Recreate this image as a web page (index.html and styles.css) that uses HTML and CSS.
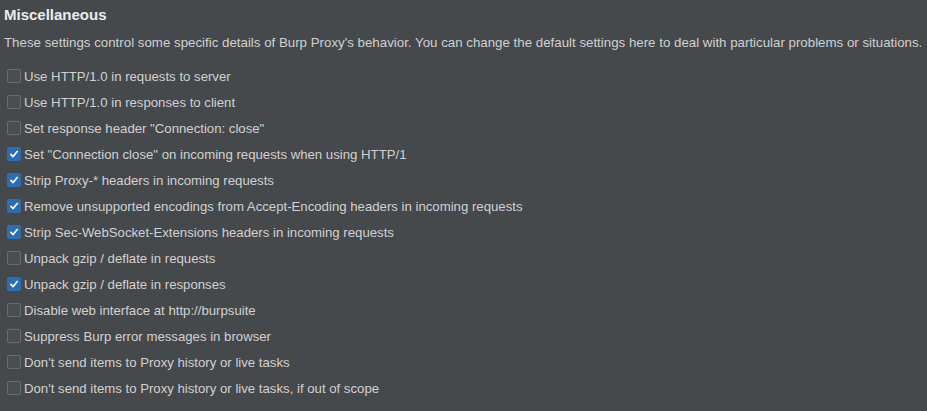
FILE: index.html
```html
<!DOCTYPE html>
<html>
<head>
<meta charset="utf-8">
<link rel="stylesheet" href="styles.css">
</head>
<body>
<div class="panel">
  <h2 class="title">Miscellaneous</h2>
  <p class="desc">These settings control some specific details of Burp Proxy's behavior. You can change the default settings here to deal with particular problems or situations.</p>
  <ul class="opts">
    <li class="opt"><span class="cb"></span>Use HTTP/1.0 in requests to server</li>
    <li class="opt"><span class="cb"></span>Use HTTP/1.0 in responses to client</li>
    <li class="opt"><span class="cb"></span>Set response header "Connection: close"</li>
    <li class="opt"><span class="cb on"><svg viewBox="0 0 13 13"><path d="M3 6.8 L5.5 9.3 L10 3.8"/></svg></span>Set "Connection close" on incoming requests when using HTTP/1</li>
    <li class="opt"><span class="cb on"><svg viewBox="0 0 13 13"><path d="M3 6.8 L5.5 9.3 L10 3.8"/></svg></span>Strip Proxy-* headers in incoming requests</li>
    <li class="opt"><span class="cb on"><svg viewBox="0 0 13 13"><path d="M3 6.8 L5.5 9.3 L10 3.8"/></svg></span>Remove unsupported encodings from Accept-Encoding headers in incoming requests</li>
    <li class="opt"><span class="cb on"><svg viewBox="0 0 13 13"><path d="M3 6.8 L5.5 9.3 L10 3.8"/></svg></span>Strip Sec-WebSocket-Extensions headers in incoming requests</li>
    <li class="opt"><span class="cb"></span>Unpack gzip / deflate in requests</li>
    <li class="opt"><span class="cb on"><svg viewBox="0 0 13 13"><path d="M3 6.8 L5.5 9.3 L10 3.8"/></svg></span>Unpack gzip / deflate in responses</li>
    <li class="opt"><span class="cb"></span>Disable web interface at http://burpsuite</li>
    <li class="opt"><span class="cb"></span>Suppress Burp error messages in browser</li>
    <li class="opt"><span class="cb"></span>Don't send items to Proxy history or live tasks</li>
    <li class="opt"><span class="cb"></span>Don't send items to Proxy history or live tasks, if out of scope</li>
  </ul>
</div>
</body>
</html>
```
FILE: styles.css
```css
html, body {
  margin: 0;
  padding: 0;
  background: #46494c;
}
body {
  font-family: "Liberation Sans", Arial, sans-serif;
  color: #d2d3d4;
  width: 927px;
  height: 411px;
  overflow: hidden;
}
.panel {
  padding: 5px 0 0 4px;
}
.title {
  margin: 0;
  font-size: 15px;
  font-weight: bold;
  line-height: 20px;
  color: #ececec;
}
.desc {
  margin: 9px 0 0 0;
  font-size: 13.3px;
  line-height: 18px;
  color: #cfd0d1;
  white-space: nowrap;
}
.opts {
  list-style: none;
  margin: 11px 0 0 0;
  padding: 0 0 0 3px;
}
.opt {
  display: flex;
  align-items: center;
  height: 26px;
  font-size: 13.2px;
  color: #d0d1d2;
}
.cb {
  box-sizing: border-box;
  width: 14px;
  height: 14px;
  margin-right: 3px;
  border: 1px solid #6a6d70;
  border-radius: 2px;
  background: #4b4e51;
  display: flex;
  align-items: center;
  justify-content: center;
}
.cb.on {
  background: #2e6db3;
  border-color: #2e6db3;
}
.cb svg {
  width: 12px;
  height: 12px;
  fill: none;
  stroke: #ffffff;
  stroke-width: 1.8;
  stroke-linecap: round;
  stroke-linejoin: round;
}
```
